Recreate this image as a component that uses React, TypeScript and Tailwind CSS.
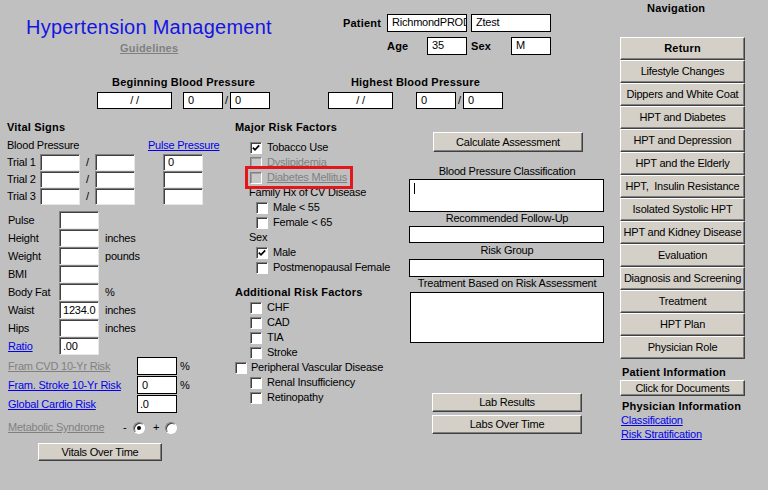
import React from "react";

function SInput({ cls = "", value = "" }: { cls?: string; value?: string }) {
  return (
    <div
      className={`bg-white shrink-0 border border-t-[#808080] border-l-[#808080] border-b-[#e8e8e8] border-r-[#e8e8e8] shadow-[inset_1px_1px_0_#404040] overflow-hidden whitespace-nowrap pl-[3px] leading-[15px] ${cls}`}
    >
      {value}
    </div>
  );
}

function BInput({ cls = "", value = "", children }: { cls?: string; value?: string; children?: React.ReactNode }) {
  return (
    <div className={`bg-white shrink-0 border border-black overflow-hidden whitespace-nowrap leading-[15px] ${cls}`}>
      {value}
      {children}
    </div>
  );
}

function Check({ checked = false, disabled = false }: { checked?: boolean; disabled?: boolean }) {
  return (
    <div
      className={`w-[12px] h-[12px] shrink-0 border border-t-[#808080] border-l-[#808080] border-b-white border-r-white ${
        disabled ? "bg-[#c8c8c8] shadow-[inset_1px_1px_0_#a0a0a0]" : "bg-white shadow-[inset_1px_1px_0_#404040]"
      } flex items-center justify-center`}
    >
      {checked && (
        <svg width="8" height="8" viewBox="0 0 8 8">
          <path d="M0.8 3.6 L3 5.8 L7.2 1.4" stroke="black" strokeWidth="1.7" fill="none" />
        </svg>
      )}
    </div>
  );
}

function Radio({ checked = false }: { checked?: boolean }) {
  return (
    <div className="w-[12px] h-[12px] shrink-0 rounded-full bg-white border border-t-[#808080] border-l-[#808080] border-b-white border-r-white shadow-[inset_1px_1px_0_#404040] flex items-center justify-center">
      {checked && <div className="w-[4px] h-[4px] rounded-full bg-black" />}
    </div>
  );
}

function Btn({ cls = "", children }: { cls?: string; children: React.ReactNode }) {
  return (
    <div
      className={`bg-[#d4d0c8] shrink-0 border border-t-white border-l-white border-r-[#404040] border-b-[#404040] shadow-[inset_-1px_-1px_0_#808080] flex items-center justify-center whitespace-nowrap ${cls}`}
    >
      {children}
    </div>
  );
}

const vitals = [
  { label: "Pulse", value: "", unit: "" },
  { label: "Height", value: "", unit: "inches" },
  { label: "Weight", value: "", unit: "pounds" },
  { label: "BMI", value: "", unit: "" },
  { label: "Body Fat", value: "", unit: "%" },
  { label: "Waist", value: "1234.0", unit: "inches" },
  { label: "Hips", value: "", unit: "inches" },
  { label: "Ratio", value: ".00", unit: "", link: true },
];

const navItems = [
  "Lifestyle Changes",
  "Dippers and White Coat",
  "HPT and Diabetes",
  "HPT and Depression",
  "HPT and the Elderly",
  "HPT,  Insulin Resistance",
  "Isolated Systolic HPT",
  "HPT and Kidney Disease",
  "Evaluation",
  "Diagnosis and Screening",
  "Treatment",
  "HPT Plan",
  "Physician Role",
];

export default function App() {
  return (
    <div className="w-[768px] h-[490px] bg-[#c0c0c0] flex text-[11px] leading-[13px] tracking-[-0.22px] text-black font-['Liberation_Sans',Arial,sans-serif] overflow-hidden">
      {/* Main area */}
      <div className="w-[620px] shrink-0 flex flex-col">
        {/* Header */}
        <div className="h-[76px] flex shrink-0">
          <div className="w-[343px] shrink-0 flex flex-col">
            <div className="mt-[16px] ml-[26px] text-[20px] leading-[23px] tracking-[0.25px] text-[#1515e0] whitespace-nowrap">
              Hypertension Management
            </div>
            <div className="mt-[3px] ml-[120px] font-bold tracking-[0.2px] text-[#808080] underline">Guidelines</div>
          </div>
          <div className="flex flex-col pt-[14px] gap-[5px]">
            <div className="flex items-center">
              <div className="w-[44px] font-bold tracking-[0.2px]">Patient</div>
              <BInput cls="w-[80px] h-[18px] pl-[4px]" value="RichmondPRODUCTION" />
              <BInput cls="ml-[4px] w-[80px] h-[18px] pl-[4px]" value="Ztest" />
            </div>
            <div className="flex items-center pl-[44px]">
              <div className="w-[40px] font-bold tracking-[0.2px]">Age</div>
              <BInput cls="w-[40px] h-[18px] pl-[4px]" value="35" />
              <div className="ml-[4px] w-[40px] font-bold tracking-[0.2px]">Sex</div>
              <BInput cls="w-[40px] h-[18px] pl-[4px]" value="M" />
            </div>
          </div>
        </div>

        {/* Blood pressure row */}
        <div className="h-[33px] flex shrink-0">
          <div className="ml-[97px] flex flex-col items-center">
            <div className="font-bold tracking-[0.2px] whitespace-nowrap">Beginning Blood Pressure</div>
            <div className="mt-[3px] flex items-center">
              <BInput cls="w-[75px] h-[17px] text-center" value="/ /" />
              <BInput cls="ml-[11px] w-[40px] h-[17px] pl-[4px]" value="0" />
              <div className="w-[7px] text-center">/</div>
              <BInput cls="w-[40px] h-[17px] pl-[4px]" value="0" />
            </div>
          </div>
          <div className="ml-[58px] flex flex-col items-center">
            <div className="font-bold tracking-[0.2px] whitespace-nowrap">Highest Blood Pressure</div>
            <div className="mt-[3px] flex items-center">
              <BInput cls="w-[65px] h-[17px] text-center" value="/ /" />
              <BInput cls="ml-[23px] w-[40px] h-[17px] pl-[4px]" value="0" />
              <div className="w-[7px] text-center">/</div>
              <BInput cls="w-[40px] h-[17px] pl-[4px]" value="0" />
            </div>
          </div>
        </div>

        {/* Columns */}
        <div className="flex flex-1">
          {/* Vital signs */}
          <div className="w-[228px] shrink-0 flex flex-col">
            <div className="mt-[12px] ml-[7px] font-bold tracking-[0.2px]">Vital Signs</div>
            <div className="mt-[5px] flex">
              <div className="ml-[7px] w-[141px]">Blood Pressure</div>
              <div className="text-[#0000ee] underline">Pulse Pressure</div>
            </div>
            <div className="mt-[2px] flex flex-col">
              {[1, 2, 3].map((n) => (
                <div key={n} className="flex items-center h-[17px]">
                  <div className="ml-[7px] w-[33px]">Trial {n}</div>
                  <SInput cls="w-[40px] h-[17px]" />
                  <div className="w-[15px] text-center">/</div>
                  <SInput cls="w-[40px] h-[17px]" />
                  <SInput cls="ml-[28px] w-[40px] h-[17px] pl-[4px]" value={n === 1 ? "0" : ""} />
                </div>
              ))}
            </div>
            <div className="mt-[6px] flex flex-col">
              {vitals.map((r) => (
                <div key={r.label} className="flex items-center h-[18px]">
                  <div className={`ml-[8px] w-[51px] ${r.link ? "text-[#0000ee] underline" : ""}`}>{r.label}</div>
                  <SInput cls="w-[40px] h-[18px] leading-[16px]" value={r.value} />
                  <div className="ml-[6px]">{r.unit}</div>
                </div>
              ))}
            </div>
            <div className="mt-[2px] flex flex-col">
              <div className="flex items-start h-[19px]">
                <div className="ml-[8px] w-[129px] leading-[18px] underline text-[#808080] whitespace-nowrap">Fram CVD 10-Yr Risk</div>
                <BInput cls="w-[40px] h-[18px] pl-[4px] leading-[16px]" />
                <div className="ml-[3px] leading-[18px]">%</div>
              </div>
              <div className="flex items-start h-[19px]">
                <div className="ml-[8px] w-[129px] leading-[18px] underline text-[#0000ee] whitespace-nowrap">Fram. Stroke 10-Yr Risk</div>
                <BInput cls="w-[40px] h-[18px] pl-[4px] leading-[16px]" value="0" />
                <div className="ml-[3px] leading-[18px]">%</div>
              </div>
              <div className="flex items-start h-[19px]">
                <div className="ml-[8px] w-[129px] leading-[18px] underline text-[#0000ee] whitespace-nowrap">Global Cardio Risk</div>
                <BInput cls="w-[40px] h-[18px] pl-[2px] leading-[16px]" value=".0" />
              </div>
            </div>
            <div className="mt-[4px] h-[19px] flex items-center">
              <div className="ml-[8px] w-[115px] underline text-[#808080] whitespace-nowrap">Metabolic Syndrome</div>
              <div className="w-[10px]">-</div>
              <Radio checked />
              <div className="ml-[8px] w-[12px]">+</div>
              <Radio />
            </div>
            <Btn cls="mt-[6px] ml-[38px] w-[124px] h-[18px]">Vitals Over Time</Btn>
          </div>

          {/* Risk factors */}
          <div className="w-[172px] shrink-0 relative flex flex-col">
            <div className="mt-[12px] ml-[7px] font-bold tracking-[0.2px]">Major Risk Factors</div>
            <div className="mt-[6px] flex flex-col">
              <div className="h-[15px] flex items-center pl-[22px]">
                <Check checked />
                <div className="ml-[5px]">Tobacco Use</div>
              </div>
              <div className="h-[15px] flex items-center pl-[22px]">
                <Check disabled />
                <div className="ml-[5px] text-[#808080] underline">Dyslipidemia</div>
              </div>
              <div className="h-[15px] flex items-center pl-[22px]">
                <Check disabled />
                <div className="ml-[5px] text-[#808080] underline">Diabetes Mellitus</div>
              </div>
              <div className="h-[15px] flex items-center pl-[21px] whitespace-nowrap">Family Hx of CV Disease</div>
              <div className="h-[15px] flex items-center pl-[28px]">
                <Check />
                <div className="ml-[5px]">Male &lt; 55</div>
              </div>
              <div className="h-[15px] flex items-center pl-[28px]">
                <Check />
                <div className="ml-[5px]">Female &lt; 65</div>
              </div>
              <div className="h-[15px] flex items-center pl-[21px]">Sex</div>
              <div className="h-[15px] flex items-center pl-[28px]">
                <Check checked />
                <div className="ml-[5px]">Male</div>
              </div>
              <div className="h-[15px] flex items-center pl-[28px]">
                <Check />
                <div className="ml-[5px] whitespace-nowrap">Postmenopausal Female</div>
              </div>
            </div>
            <div className="mt-[11px] ml-[7px] font-bold tracking-[0.2px] whitespace-nowrap">Additional Risk Factors</div>
            <div className="mt-[1px] flex flex-col">
              {["CHF", "CAD", "TIA", "Stroke"].map((t) => (
                <div key={t} className="h-[15px] flex items-center pl-[22px]">
                  <Check />
                  <div className="ml-[5px]">{t}</div>
                </div>
              ))}
              <div className="h-[15px] flex items-center pl-[7px]">
                <Check />
                <div className="ml-[4px] whitespace-nowrap">Peripheral Vascular Disease</div>
              </div>
              {["Renal Insufficiency", "Retinopathy"].map((t) => (
                <div key={t} className="h-[15px] flex items-center pl-[22px]">
                  <Check />
                  <div className="ml-[5px] whitespace-nowrap">{t}</div>
                </div>
              ))}
            </div>
            <div className="absolute left-[17px] top-[57px] w-[108px] h-[23px] border-[3px] border-[#e3161b]" />
          </div>

          {/* Assessment */}
          <div className="w-[215px] shrink-0 flex flex-col">
            <Btn cls="mt-[23px] ml-[33px] w-[150px] h-[20px]">Calculate Assessment</Btn>
            <div className="mt-[13px] ml-[9px] w-[196px] text-center whitespace-nowrap">Blood Pressure Classification</div>
            <BInput cls="mt-[1px] ml-[9px] w-[195px] h-[33px]">
              <div className="ml-[4px] mt-[3px] w-[1px] h-[11px] bg-black" />
            </BInput>
            <div className="ml-[9px] w-[196px] text-center whitespace-nowrap">Recommended Follow-Up</div>
            <BInput cls="mt-[1px] ml-[9px] w-[195px] h-[17px]" />
            <div className="mt-[1px] ml-[9px] w-[196px] text-center">Risk Group</div>
            <BInput cls="mt-[2px] ml-[9px] w-[195px] h-[18px]" />
            <div className="ml-[9px] w-[196px] text-center whitespace-nowrap">Treatment Based on Risk Assessment</div>
            <BInput cls="mt-[2px] ml-[10px] w-[194px] h-[51px]" />
            <Btn cls="mt-[50px] ml-[32px] w-[150px] h-[19px]">Lab Results</Btn>
            <Btn cls="mt-[3px] ml-[32px] w-[150px] h-[19px]">Labs Over Time</Btn>
          </div>
        </div>
      </div>

      {/* Navigation */}
      <div className="w-[125px] shrink-0 flex flex-col">
        <div className="mt-[2px] pl-[27px] font-bold tracking-[0.2px]">Navigation</div>
        <div className="mt-[22px] flex flex-col">
          <Btn cls="h-[23px] font-bold tracking-[0.2px]">Return</Btn>
          {navItems.map((n) => (
            <Btn key={n} cls="h-[23px]">
              <span className="whitespace-pre">{n}</span>
            </Btn>
          ))}
        </div>
        <div className="mt-[7px] pl-[2px] font-bold tracking-[0.2px] whitespace-nowrap">Patient Information</div>
        <Btn cls="mt-[1px] h-[16px]">Click for Documents</Btn>
        <div className="mt-[4px] pl-[2px] font-bold tracking-[0.2px] whitespace-nowrap">Physician Information</div>
        <div className="mt-[1px] pl-[1px] text-[#0000ee] underline">Classification</div>
        <div className="mt-[1px] pl-[1px] text-[#0000ee] underline">Risk Stratification</div>
      </div>
    </div>
  );
}
